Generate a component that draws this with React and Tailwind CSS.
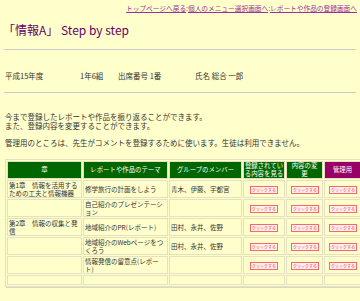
const font = { fontFamily: '"Noto Sans CJK JP", "Liberation Sans", sans-serif' };

const rows = [
  { chapter: '第1章　情報を活用するための工夫と情報機器', theme: '修学旅行の計画をしよう', members: '青木、伊藤、宇都宮', buttons: true },
  { chapter: '', theme: '自己紹介のプレゼンテーション', members: '', buttons: true },
  { chapter: '第2章　情報の収集と発信', theme: '地域紹介のPR(レポート)', members: '田村、永井、佐野', buttons: true },
  { chapter: '', theme: '地域紹介のWebページをつくろう', members: '田村、永井、佐野', buttons: true },
  { chapter: '', theme: '情報発信の留意点(レポート)', members: '', buttons: true },
  { chapter: '', theme: '', members: '', buttons: false },
];

function ClickButton() {
  return (
    <span className="inline-flex items-center justify-center w-[28px] h-[8px] border border-[#ff6666] bg-[#fff0f0] overflow-hidden align-middle">
      <span className="inline-block text-[8px] leading-none text-[#ee3333] whitespace-nowrap scale-[0.5]">クリックする</span>
    </span>
  );
}

const th = 'font-normal border border-[#e4e0c0] whitespace-nowrap text-[6.4px] leading-[8px]';
const td = 'border border-[#e4e0c0] align-middle';

export default function App() {
  return (
    <div className="w-[360px] h-[301px] bg-[#ffffcc] text-[#333] overflow-hidden" style={font}>
      <div className="flex justify-end pr-[3px] pt-[4px] text-[6.7px] leading-[8px] text-[#993399]">
        <span className="underline">トップページへ戻る</span>
        <span className="text-[#666]">:</span>
        <span className="underline">個人のメニュー選択画面へ</span>
        <span className="text-[#666]">:</span>
        <span className="underline">レポートや作品の登録画面へ</span>
      </div>

      <h1 className="mt-[10px] ml-[3px] text-[12px] leading-[16px] text-[#660066]">「情報A」 Step by step</h1>

      <div className="mt-[11px] mx-[4px] h-[1px] bg-[#cccccc]" />

      <div className="mt-[21px] ml-[5px] flex text-[7.5px] leading-[9px]">
        <span className="w-[75px]">平成15年度</span>
        <span className="w-[38px]">1年6組</span>
        <span className="w-[77px]">出席番号 1番</span>
        <span>氏名 総合 一郎</span>
      </div>

      <div className="mt-[12px] mx-[4px] h-[1px] bg-[#cccccc]" />

      <div className="mt-[19px] ml-[5px] text-[7.5px] leading-[9px]">
        <p>今まで登録したレポートや作品を振り返ることができます。</p>
        <p>また、登録内容を変更することができます。</p>
        <p className="mt-[8px]">管理用のところは、先生がコメントを登録するために使います。生徒は利用できません。</p>
      </div>

      <table className="mt-[12px] ml-[5px] w-[351px] border-separate border-spacing-[1px] border border-[#e4e0c0] shadow-[1px_1px_0_#d8d8c8] text-[6.5px] leading-[8px] table-fixed">
        <colgroup>
          <col className="w-[75px]" />
          <col className="w-[85px]" />
          <col className="w-[73px]" />
          <col className="w-[42px]" />
          <col className="w-[37px]" />
          <col className="w-[37px]" />
        </colgroup>
        <thead>
          <tr className="h-[18px] text-white">
            <th className={`bg-[#006600] ${th}`}>章</th>
            <th className={`bg-[#006600] ${th}`}>レポートや作品のテーマ</th>
            <th className={`bg-[#006600] ${th}`}>グループのメンバー</th>
            <th className={`bg-[#006600] ${th}`}>登録されてい<br />る内容を見る</th>
            <th className={`bg-[#006600] ${th}`}>内容の変<br />更</th>
            <th className={`bg-[#990066] ${th}`}>管理用</th>
          </tr>
        </thead>
        <tbody>
          {rows.map((r, i) => (
            <tr key={i} className={r.buttons ? 'h-[17px]' : 'h-[10px]'}>
              <td className={`${td} px-[1px]`}>{r.chapter}</td>
              <td className={`${td} px-[1px]`}>{r.theme}</td>
              <td className={`${td} px-[1px]`}>{r.members}</td>
              <td className={`${td} text-center`}>{r.buttons && <ClickButton />}</td>
              <td className={`${td} text-center`}>{r.buttons && <ClickButton />}</td>
              <td className={`${td} text-center`}>{r.buttons && <ClickButton />}</td>
            </tr>
          ))}
        </tbody>
      </table>
    </div>
  );
}
